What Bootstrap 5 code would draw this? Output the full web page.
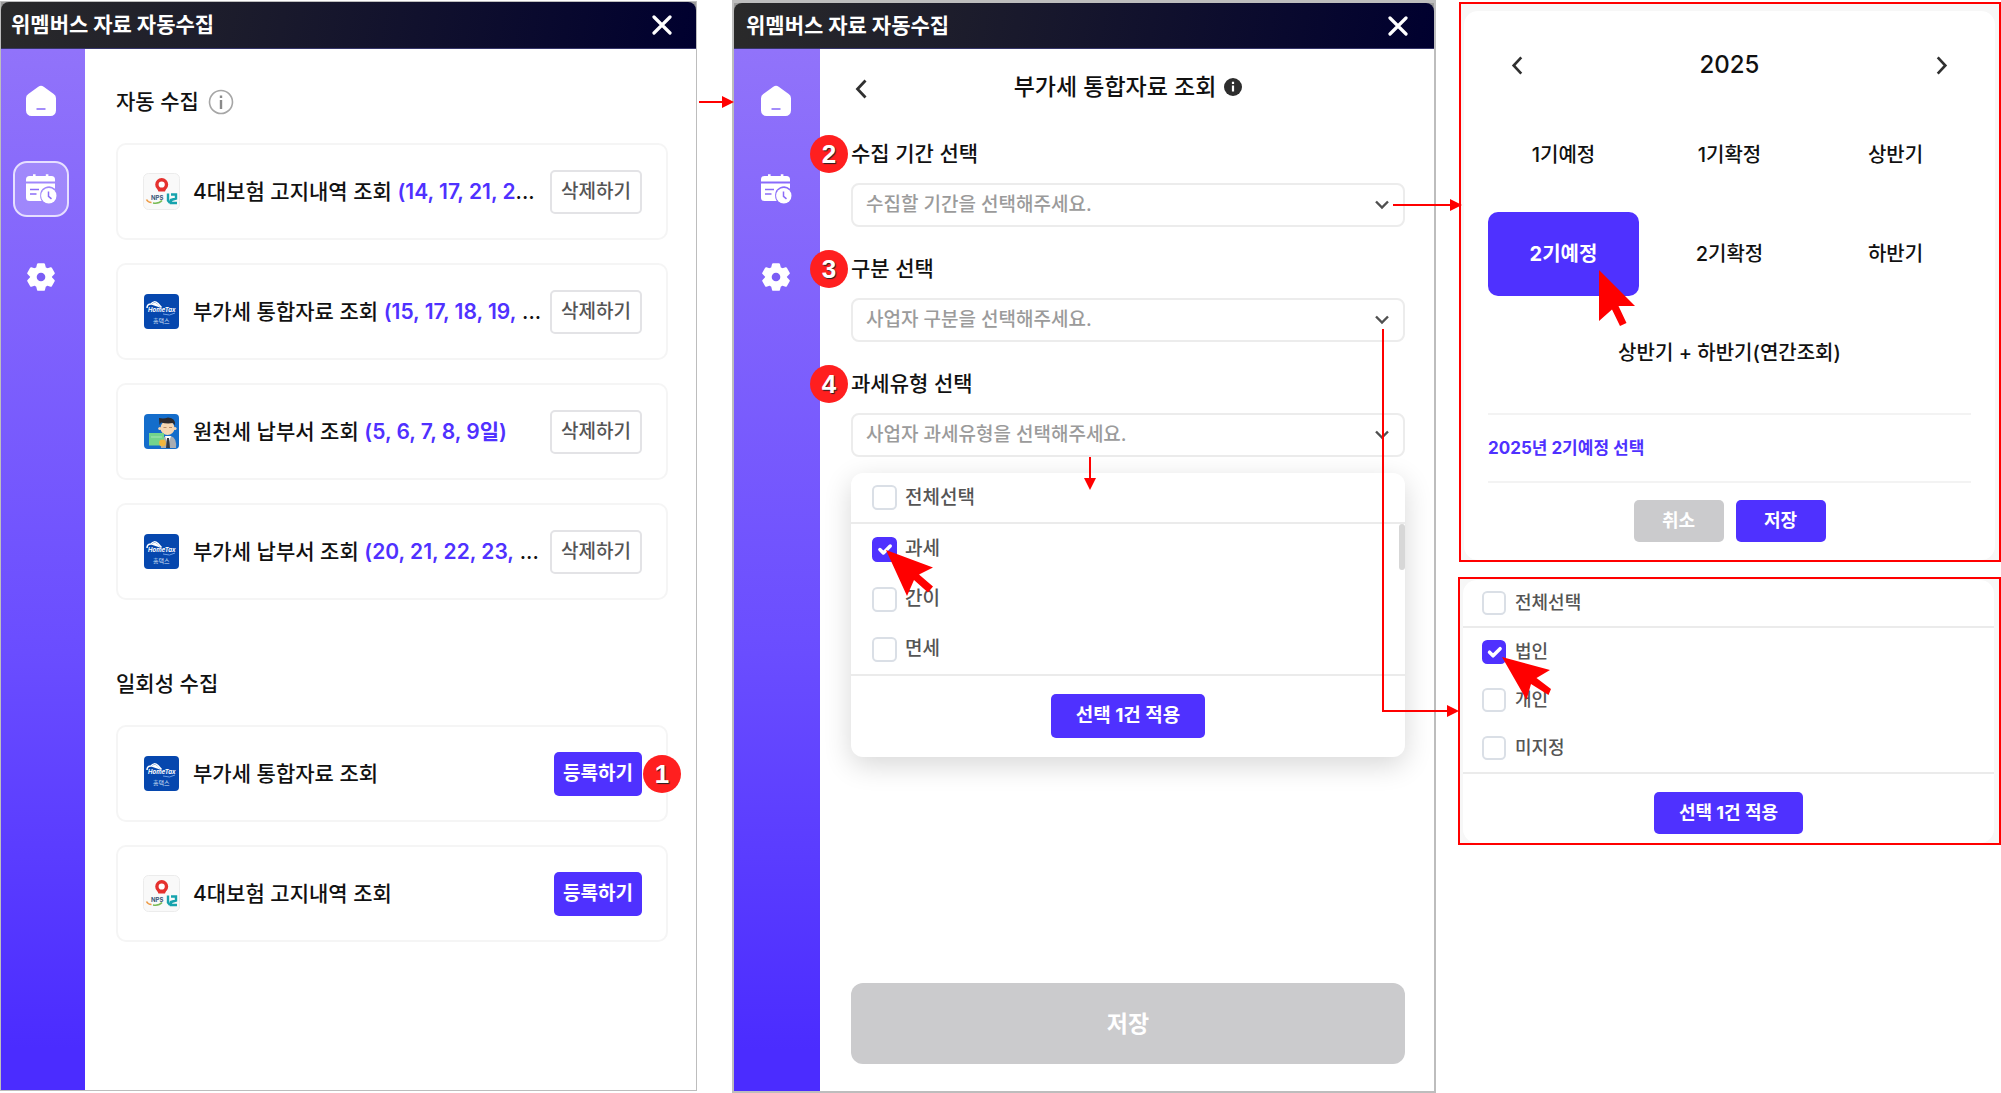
<!DOCTYPE html>
<html lang="ko">
<head>
<meta charset="utf-8">
<meta name="viewport" content="width=device-width, initial-scale=1">
<title>위멤버스 자료 자동수집</title>
<link href="https://cdn.jsdelivr.net/npm/bootstrap@5.3.0/dist/css/bootstrap.min.css" rel="stylesheet">
<style>
:root{--brand:#4f31ff;--muted:#cbcbcd;--callout:#ff0000}
body{font-family:Inter,"Noto Sans CJK KR",sans-serif;font-size:21px;line-height:28px;color:#111;background:#fff}
button{line-height:28px}
.board{min-height:100vh;gap:35px}
.win{position:relative;border:1px solid #bdbdbd;margin:1px 0 2px;flex:695 1 0;min-width:0}
.win-two{border-width:2px;border-top-width:3px;margin:0;flex:700 1 0}
.side-col{flex:543 1 0;min-width:0;margin-left:-13px;padding-top:2px;gap:15px}
.titlebar{height:47px;padding:0 24px 0 10px;color:#fff;font-weight:700;background:linear-gradient(100deg,#2a2a2a,#00002f);border-radius:8px 8px 0 0;border-bottom:1px solid #36366a}
.win-two .titlebar{height:46px;padding-left:12px;padding-right:26px}
.titlebar-wrap{background:#9a9a9a}
.btn-plain{border:0;background:none;padding:0;display:flex;color:inherit}
.rail{width:84px;padding:24px 0 0 12px;gap:32px;background:linear-gradient(#9173fa,#6a4dff 58%,#4b2cff 96%)}
.win-two .rail{width:86px;padding-left:14px}
.rail a{width:56px;height:56px;border-radius:14px;display:flex;align-items:center;justify-content:center;border:2px solid transparent}
.rail a.current{border-color:#e6dfff;background:rgba(255,255,255,.2)}
.pane{padding:39px 28px 24px 31px;min-width:0}
.sec-head{height:28px;gap:8px;margin-bottom:27px}
.sec-head + .job-list + .sec-head{margin-top:70px}
.sec-title{font-size:21px;line-height:28px;font-weight:500;margin:0}
.job-list{gap:23px}
.job{height:97px;border:2px solid #f5f5f5;border-radius:10px;padding:0 24px 0 25px;gap:13px;position:relative}
.job-icon{width:37px;height:37px;flex:none}
.job-name{font-weight:500;flex:1 1 0;min-width:0;white-space:nowrap}
.job-days{color:var(--brand);font-weight:600}
.btn-flat{font-size:19px;font-weight:700;height:44px;padding:0 9px;border:0;border-radius:5px;color:#fff;background:var(--brand);white-space:nowrap}
.btn-flat:disabled{background:var(--muted);opacity:1;color:#fff}
.btn-del{background:#fff;border:2px solid #e3e3e6;color:#555;font-weight:500}
.step-no{position:absolute;width:38px;height:38px;border-radius:50%;background:#ff1f1f;color:#fff;font:700 26px/38px "Liberation Sans",sans-serif;text-align:center;text-shadow:1px 1px 1px #222;z-index:3}
.job .step-no{right:-15px;top:28px}
.mark-line{position:absolute;z-index:4;pointer-events:none;overflow:visible}
.to-win{left:100%;top:94px;margin-left:3px}
.pane-two{padding:21px 29px 27px 31px}
.page-head{margin-bottom:36px}
.page-title{font-size:23px;line-height:34px;font-weight:500;margin:0}
.field{position:relative;margin-bottom:28px}
.field label{display:block;font-weight:500;margin-bottom:15px;line-height:28px}
.field .step-no{left:-41px;top:-5px}
.form-select{height:44px;border:2px solid #ececec;border-radius:8px;color:#9b9b9b;font-size:19px;font-weight:500;line-height:28px;padding:0 40px 0 13px;background-size:16px 16px;background-position:right 13px center;background-image:url("data:image/svg+xml,%3csvg xmlns='http://www.w3.org/2000/svg' viewBox='0 0 16 16'%3e%3cpath fill='none' stroke='%23505050' stroke-width='2.4' d='M2 4.5l6 6 6-6'/%3e%3c/svg%3e")}
.drop{position:relative;border-radius:12px;background:#fff;box-shadow:0 8px 28px rgba(0,0,0,.16);margin-top:-12px}
.tick-row{height:50px;padding-left:21px;gap:8px}
.tick-row label{font-size:19px;font-weight:500;color:#555;line-height:28px}
.tick-row input{width:25px;height:25px;margin:0;border:2px solid #dadfe6;border-radius:6px;flex:none;background-size:23px 23px}
.tick-row input:checked{background-color:var(--brand);border-color:var(--brand)}
.rule-b{height:51px;border-bottom:2px solid #ebebeb}
.tick-foot{border-top:2px solid #ebebeb;padding:18px 0 19px}
.thumb{position:absolute;right:0;top:51px;width:6px;height:46px;border-radius:3px;background:#d7d7d7}
.btn-apply{padding:0 25px}
.btn-save{height:81px;font-size:23px;border-radius:12px}
.callout{border:2px solid var(--callout);background:#f7f7f7;position:relative;padding:7px 4px 0 3px}
.callout-cal{margin-left:1px}
.sheet{background:#fff;border-radius:14px;padding:34px 24px 18px;font-weight:500}
.year{font-size:24px;line-height:40px}
.year-row{padding:0 23px 0 23px;margin-bottom:28px}
.terms{display:grid;grid-template-columns:repeat(3,1fr);gap:15px}
.term{height:84px;border:0;border-radius:10px;background:none;font-size:20px;font-weight:500;color:#111;position:relative}
.term.wide{grid-column:1/-1}
.term.on{background:var(--brand);color:#fff;font-weight:700}
.chosen{margin-top:18px;padding:18px 0;height:70px;border:solid #f3f3f3;border-width:2px 0;color:var(--brand);font-size:17px;font-weight:700;line-height:30px}
.cal-foot{margin-top:17px;gap:12px}
.cal-foot .btn-flat{width:90px;height:42px;font-size:18px}
.callout-pick{padding:1px 5px 0 3px}
.callout-pick .sheet{padding:0}
.callout-pick .tick-row{height:48px;padding-left:19px;gap:9px}
.callout-pick .tick-row label{font-size:18px}
.callout-pick .tick-row input{width:24px;height:24px}
.callout-pick .tick-foot{padding:18px 0 9px}
.callout-pick .btn-flat{height:42px;font-size:18px}
</style>
<script src="https://cdn.jsdelivr.net/npm/bootstrap@5.3.0/dist/js/bootstrap.bundle.min.js"></script>
</head>
<body>
<svg width="0" height="0" class="position-absolute" aria-hidden="true">
  <defs>
    <symbol id="i-home" viewBox="0 0 32 32"><path fill="#fff" d="M13.3 1.8a4.6 4.6 0 0 1 5.4 0l10 7.2A5 5 0 0 1 31 13.200V25.500a5.500 5.500 0 0 1-5.500 5.500h-19A5.500 5.500 0 0 1 1 25.500V13.200A5 5 0 0 1 3.300 9z"/><path stroke="#8466f8" stroke-width="1.500" d="M11.500 24h9"/></symbol>
    <symbol id="i-cal" viewBox="0 0 32 32"><path fill="#fff" d="M1 8.500V6.500A3.500 3.500 0 0 1 4.500 3H8V1.200h2.600V3h10.200V1.200h2.600V3h3.100A3.500 3.500 0 0 1 30 6.500v2zM1 10.500h29v5.200a8.800 8.800 0 0 0-14.800 7.300c0 2 .5 3.500 1.500 5H4.500A3.500 3.500 0 0 1 1 24.500z"/><path stroke="#8b6cf8" stroke-width="1.600" d="M5 16.500h9M5 21h6.500"/><circle cx="23.800" cy="22.800" r="7.700" fill="#fff"/><path fill="none" stroke="#8b6cf8" stroke-width="1.500" d="M23.500 18.500v4.800l3 2.600"/></symbol>
    <symbol id="i-gear" viewBox="0 0 32 32"><path fill="#fff" stroke="#fff" stroke-width="2.500" stroke-linejoin="round" d="M13 2.500h6l1 4 2.500 1.500 4-1.200 3 5.200-3 3v2l3 3-3 5.200-4-1.200L20 25.500l-1 4h-6l-1-4L9.500 24l-4 1.200-3-5.200 3-3v-2l-3-3 3-5.200 4 1.200L12 6.500z"/><circle cx="16" cy="16" r="4.600" fill="#7b5df5"/></symbol>
    <symbol id="i-x" viewBox="0 0 20 20"><path stroke="#fff" stroke-width="3.200" stroke-linecap="round" d="M2 2l16 16M18 2L2 18"/></symbol>
    <symbol id="i-left" viewBox="0 0 12 20"><path fill="none" stroke="#303030" stroke-width="2.800" d="M10.500 1.500L2.500 10l8 8.500"/></symbol>
    <symbol id="i-right" viewBox="0 0 12 20"><path fill="none" stroke="#303030" stroke-width="2.800" d="M1.500 1.500L9.500 10l-8 8.500"/></symbol>
    <symbol id="l-ins" viewBox="0 0 37 37"><rect x=".5" y=".5" width="36" height="36" rx="5" fill="#f9f9f9" stroke="#ececec"/><circle cx="18.700" cy="11.500" r="4.800" fill="#fff" stroke="#e5312e" stroke-width="3.400"/><path fill="#e5312e" d="M14 15l4.700 1.500 4.700-1.500-1.400 3.600h-6.600z"/><text x="8" y="27" font-size="6" font-weight="700" font-family="Inter,sans-serif" fill="#3a5678">NPS</text><path fill="none" stroke="#ee9a45" stroke-width="1.600" d="M3.500 26.500q1.500 3 5 3"/><path fill="none" stroke="#79bb55" stroke-width="1.600" d="M10 30q6 1 9-2.500"/><path fill="none" stroke="#16a3ad" stroke-width="2.400" d="M25 20.500v7l2 2.500M28 21.500h5v4l-5 1.500v3h6"/></symbol>
    <symbol id="l-tax" viewBox="0 0 37 37"><rect x="1" y="1" width="35" height="35" rx="4" fill="#0647ae"/><path fill="none" stroke="#fff" stroke-width="1.500" d="M4 15q0-4 4-4 3-4 7-.5l3.500 4"/><path fill="#fff" d="M8 11.500q4-3.500 7 0l3 3.500-4-1.500z"/><text x="5" y="19" font-size="6" font-style="italic" font-weight="700" font-family="Inter,sans-serif" fill="#fff">HomeTax</text><path fill="none" stroke="#6fa0e6" d="M20 21q7 2.500 12-1"/><text x="10" y="30" font-size="6" font-family="Noto Sans CJK KR,sans-serif" fill="#d5e2f7">홈택스</text></symbol>
    <symbol id="l-man" viewBox="0 0 37 37"><rect x="1" y="1" width="35" height="35" rx="4" fill="#146dcb"/><path fill="#a9adb3" d="M18 35q-1-10 5-12h5q6 2 5 12z"/><path fill="#fff" d="M22 23l3 9 3-9z"/><circle cx="24.500" cy="15" r="7" fill="#f6d6b2"/><circle cx="16.800" cy="15.500" r="1.600" fill="#f6d6b2"/><circle cx="32" cy="15.500" r="1.600" fill="#f6d6b2"/><path fill="#2e2a2d" d="M16.500 12l-.5-7q5 1 9-.5 8 .5 7 8l-2-2.500q-6 1-12-.5z"/><path stroke="#b98d68" d="M20.500 14.500h3M26 14.500h3"/><rect x="6" y="20" width="15" height="12.500" fill="#73d58c"/><path stroke="#a6e8b5" d="M8 24h11"/><path fill="#333a45" d="M24 25h2l1 10h-4z"/><circle cx="19.500" cy="30" r="3.400" fill="#f3b63c"/></symbol>
  </defs>
</svg>

<main class="board d-flex align-items-stretch">

  <section class="win d-flex flex-column">
    <div class="titlebar-wrap"><header class="titlebar d-flex align-items-center justify-content-between">
      <span>위멤버스 자료 자동수집</span>
      <button class="btn-plain" aria-label="닫기"><svg width="20" height="20"><use href="#i-x"/></svg></button>
    </header></div>
    <div class="d-flex flex-grow-1">
      <nav class="rail d-flex flex-column flex-shrink-0">
        <a href="#" aria-label="홈"><svg width="32" height="32"><use href="#i-home"/></svg></a>
        <a href="#" class="current" aria-label="일정"><svg width="32" height="32"><use href="#i-cal"/></svg></a>
        <a href="#" aria-label="설정"><svg width="30" height="30"><use href="#i-gear"/></svg></a>
      </nav>
      <div class="pane flex-grow-1">
        <div class="sec-head d-flex align-items-center">
          <h2 class="sec-title">자동 수집</h2>
          <svg width="28" height="28" viewBox="0 0 28 28"><circle cx="14" cy="14" r="11.500" fill="none" stroke="#a6a6a6" stroke-width="1.600"/><path stroke="#8a8a8a" stroke-width="2.400" d="M14 12v9M14 7.500v2.400"/></svg>
        </div>
        <div class="job-list d-flex flex-column">
          <div class="job d-flex align-items-center"><svg class="job-icon"><use href="#l-ins"/></svg><div class="job-name">4대보험 고지내역 조회 <span class="job-days">(14, 17, 21, 2</span>...</div><button class="btn-flat btn-del">삭제하기</button></div>
          <div class="job d-flex align-items-center"><svg class="job-icon"><use href="#l-tax"/></svg><div class="job-name">부가세 통합자료 조회 <span class="job-days">(15, 17, 18, 19,</span> ...</div><button class="btn-flat btn-del">삭제하기</button></div>
          <div class="job d-flex align-items-center"><svg class="job-icon"><use href="#l-man"/></svg><div class="job-name">원천세 납부서 조회 <span class="job-days">(5, 6, 7, 8, 9일)</span></div><button class="btn-flat btn-del">삭제하기</button></div>
          <div class="job d-flex align-items-center"><svg class="job-icon"><use href="#l-tax"/></svg><div class="job-name">부가세 납부서 조회 <span class="job-days">(20, 21, 22, 23,</span> ...</div><button class="btn-flat btn-del">삭제하기</button></div>
        </div>
        <div class="sec-head"><h2 class="sec-title">일회성 수집</h2></div>
        <div class="job-list d-flex flex-column">
          <div class="job d-flex align-items-center"><svg class="job-icon"><use href="#l-tax"/></svg><div class="job-name">부가세 통합자료 조회</div><button class="btn-flat">등록하기</button><span class="step-no">1</span></div>
          <div class="job d-flex align-items-center"><svg class="job-icon"><use href="#l-ins"/></svg><div class="job-name">4대보험 고지내역 조회</div><button class="btn-flat">등록하기</button></div>
        </div>
      </div>
    </div>
    <svg class="mark-line to-win" width="36" height="12"><path stroke="red" stroke-width="2" d="M0 6h25"/><path fill="red" d="M23 0l12 6-12 6z"/></svg>
  </section>

  <section class="win win-two d-flex flex-column">
    <div class="titlebar-wrap"><header class="titlebar d-flex align-items-center justify-content-between">
      <span>위멤버스 자료 자동수집</span>
      <button class="btn-plain" aria-label="닫기"><svg width="20" height="20"><use href="#i-x"/></svg></button>
    </header></div>
    <div class="d-flex flex-grow-1">
      <nav class="rail d-flex flex-column flex-shrink-0">
        <a href="#" aria-label="홈"><svg width="32" height="32"><use href="#i-home"/></svg></a>
        <a href="#" aria-label="일정"><svg width="32" height="32"><use href="#i-cal"/></svg></a>
        <a href="#" aria-label="설정"><svg width="30" height="30"><use href="#i-gear"/></svg></a>
      </nav>
      <div class="pane pane-two flex-grow-1 d-flex flex-column">
        <div class="page-head d-flex align-items-center">
          <button class="btn-plain ps-1 pt-1" aria-label="뒤로"><svg width="12" height="20"><use href="#i-left"/></svg></button>
          <div class="flex-grow-1 d-flex align-items-center justify-content-center gap-2 pe-3">
            <h1 class="page-title">부가세 통합자료 조회</h1>
            <svg width="18" height="18" viewBox="0 0 18 18"><circle cx="9" cy="9" r="9" fill="#2d2d2d"/><path stroke="#fff" stroke-width="2.200" d="M9 7.500v6M9 3.800V6"/></svg>
          </div>
        </div>
        <div class="field">
          <span class="step-no">2</span>
          <label for="period">수집 기간 선택</label>
          <select id="period" class="form-select"><option>수집할 기간을 선택해주세요.</option></select>
          <svg class="mark-line" style="right:-57px;bottom:16px" width="69" height="12"><path stroke="red" stroke-width="2" d="M0 6h59"/><path fill="red" d="M57 0l12 6-12 6z"/></svg>
        </div>
        <div class="field">
          <span class="step-no">3</span>
          <label for="kind">구분 선택</label>
          <select id="kind" class="form-select"><option>사업자 구분을 선택해주세요.</option></select>
          <svg class="mark-line" style="right:-54px;top:74px" width="77" height="388"><path fill="none" stroke="red" stroke-width="2" d="M1 0v382h66"/><path fill="red" d="M65 376l12 6-12 6z"/></svg>
        </div>
        <div class="field">
          <span class="step-no">4</span>
          <label for="taxtype">과세유형 선택</label>
          <select id="taxtype" class="form-select"><option>사업자 과세유형을 선택해주세요.</option></select>
          <svg class="mark-line" style="left:233px;top:87px" width="12" height="33"><path stroke="red" stroke-width="2" d="M6 0v23"/><path fill="red" d="M0 21h12L6 33z"/></svg>
        </div>
        <div class="drop">
          <div class="tick-row rule-b d-flex align-items-center"><input class="form-check-input" type="checkbox" id="t0"><label for="t0">전체선택</label></div>
          <div class="tick-row d-flex align-items-center"><input class="form-check-input" type="checkbox" id="t1" checked><label for="t1">과세</label></div>
          <div class="tick-row d-flex align-items-center"><input class="form-check-input" type="checkbox" id="t2"><label for="t2">간이</label></div>
          <div class="tick-row d-flex align-items-center"><input class="form-check-input" type="checkbox" id="t3"><label for="t3">면세</label></div>
          <div class="thumb"></div>
          <div class="tick-foot text-center"><button class="btn-flat btn-apply">선택 1건 적용</button></div>
          <svg class="mark-line" style="left:35px;top:77px" width="47" height="46"><path fill="red" d="M0 0L47 17.500 33 24.500 47 36.500 42 42.500 28 30 21 46z"/></svg>
        </div>
        <button class="btn-flat btn-save mt-auto" disabled>저장</button>
      </div>
    </div>
  </section>

  <aside class="side-col d-flex flex-column">
    <section class="callout callout-cal">
      <div class="sheet">
        <div class="year-row d-flex align-items-center justify-content-between">
          <button class="btn-plain" aria-label="이전 연도"><svg width="12" height="19"><use href="#i-left"/></svg></button>
          <span class="year">2025</span>
          <button class="btn-plain" aria-label="다음 연도"><svg width="12" height="19"><use href="#i-right"/></svg></button>
        </div>
        <div class="terms">
          <button class="term">1기예정</button><button class="term">1기확정</button><button class="term">상반기</button>
          <button class="term on">2기예정<svg class="mark-line" style="left:111px;top:58px" width="36" height="56"><path fill="red" d="M0 0L36 36H19.500L27.500 53 21 56 13 39.500 0 51z"/></svg></button><button class="term">2기확정</button><button class="term">하반기</button>
          <button class="term wide">상반기 + 하반기(연간조회)</button>
        </div>
        <div class="chosen">2025년 2기예정 선택</div>
        <div class="cal-foot d-flex justify-content-center"><button class="btn-flat" disabled>취소</button><button class="btn-flat">저장</button></div>
      </div>
    </section>
    <section class="callout callout-pick">
      <div class="sheet">
        <div class="tick-row rule-b d-flex align-items-center"><input class="form-check-input" type="checkbox" id="k0"><label for="k0">전체선택</label></div>
        <div class="tick-row d-flex align-items-center"><input class="form-check-input" type="checkbox" id="k1" checked><label for="k1">법인</label></div>
        <div class="tick-row d-flex align-items-center"><input class="form-check-input" type="checkbox" id="k2"><label for="k2">개인</label></div>
        <div class="tick-row d-flex align-items-center"><input class="form-check-input" type="checkbox" id="k3"><label for="k3">미지정</label></div>
        <div class="tick-foot text-center"><button class="btn-flat btn-apply">선택 1건 적용</button></div>
      </div>
      <svg class="mark-line" style="left:42px;top:78px" width="49" height="43"><path fill="red" d="M0 0L48 13 34.500 21 49 32 46.500 38 29 27 24.500 43z"/></svg>
    </section>
  </aside>
</main>
</body>
</html>
